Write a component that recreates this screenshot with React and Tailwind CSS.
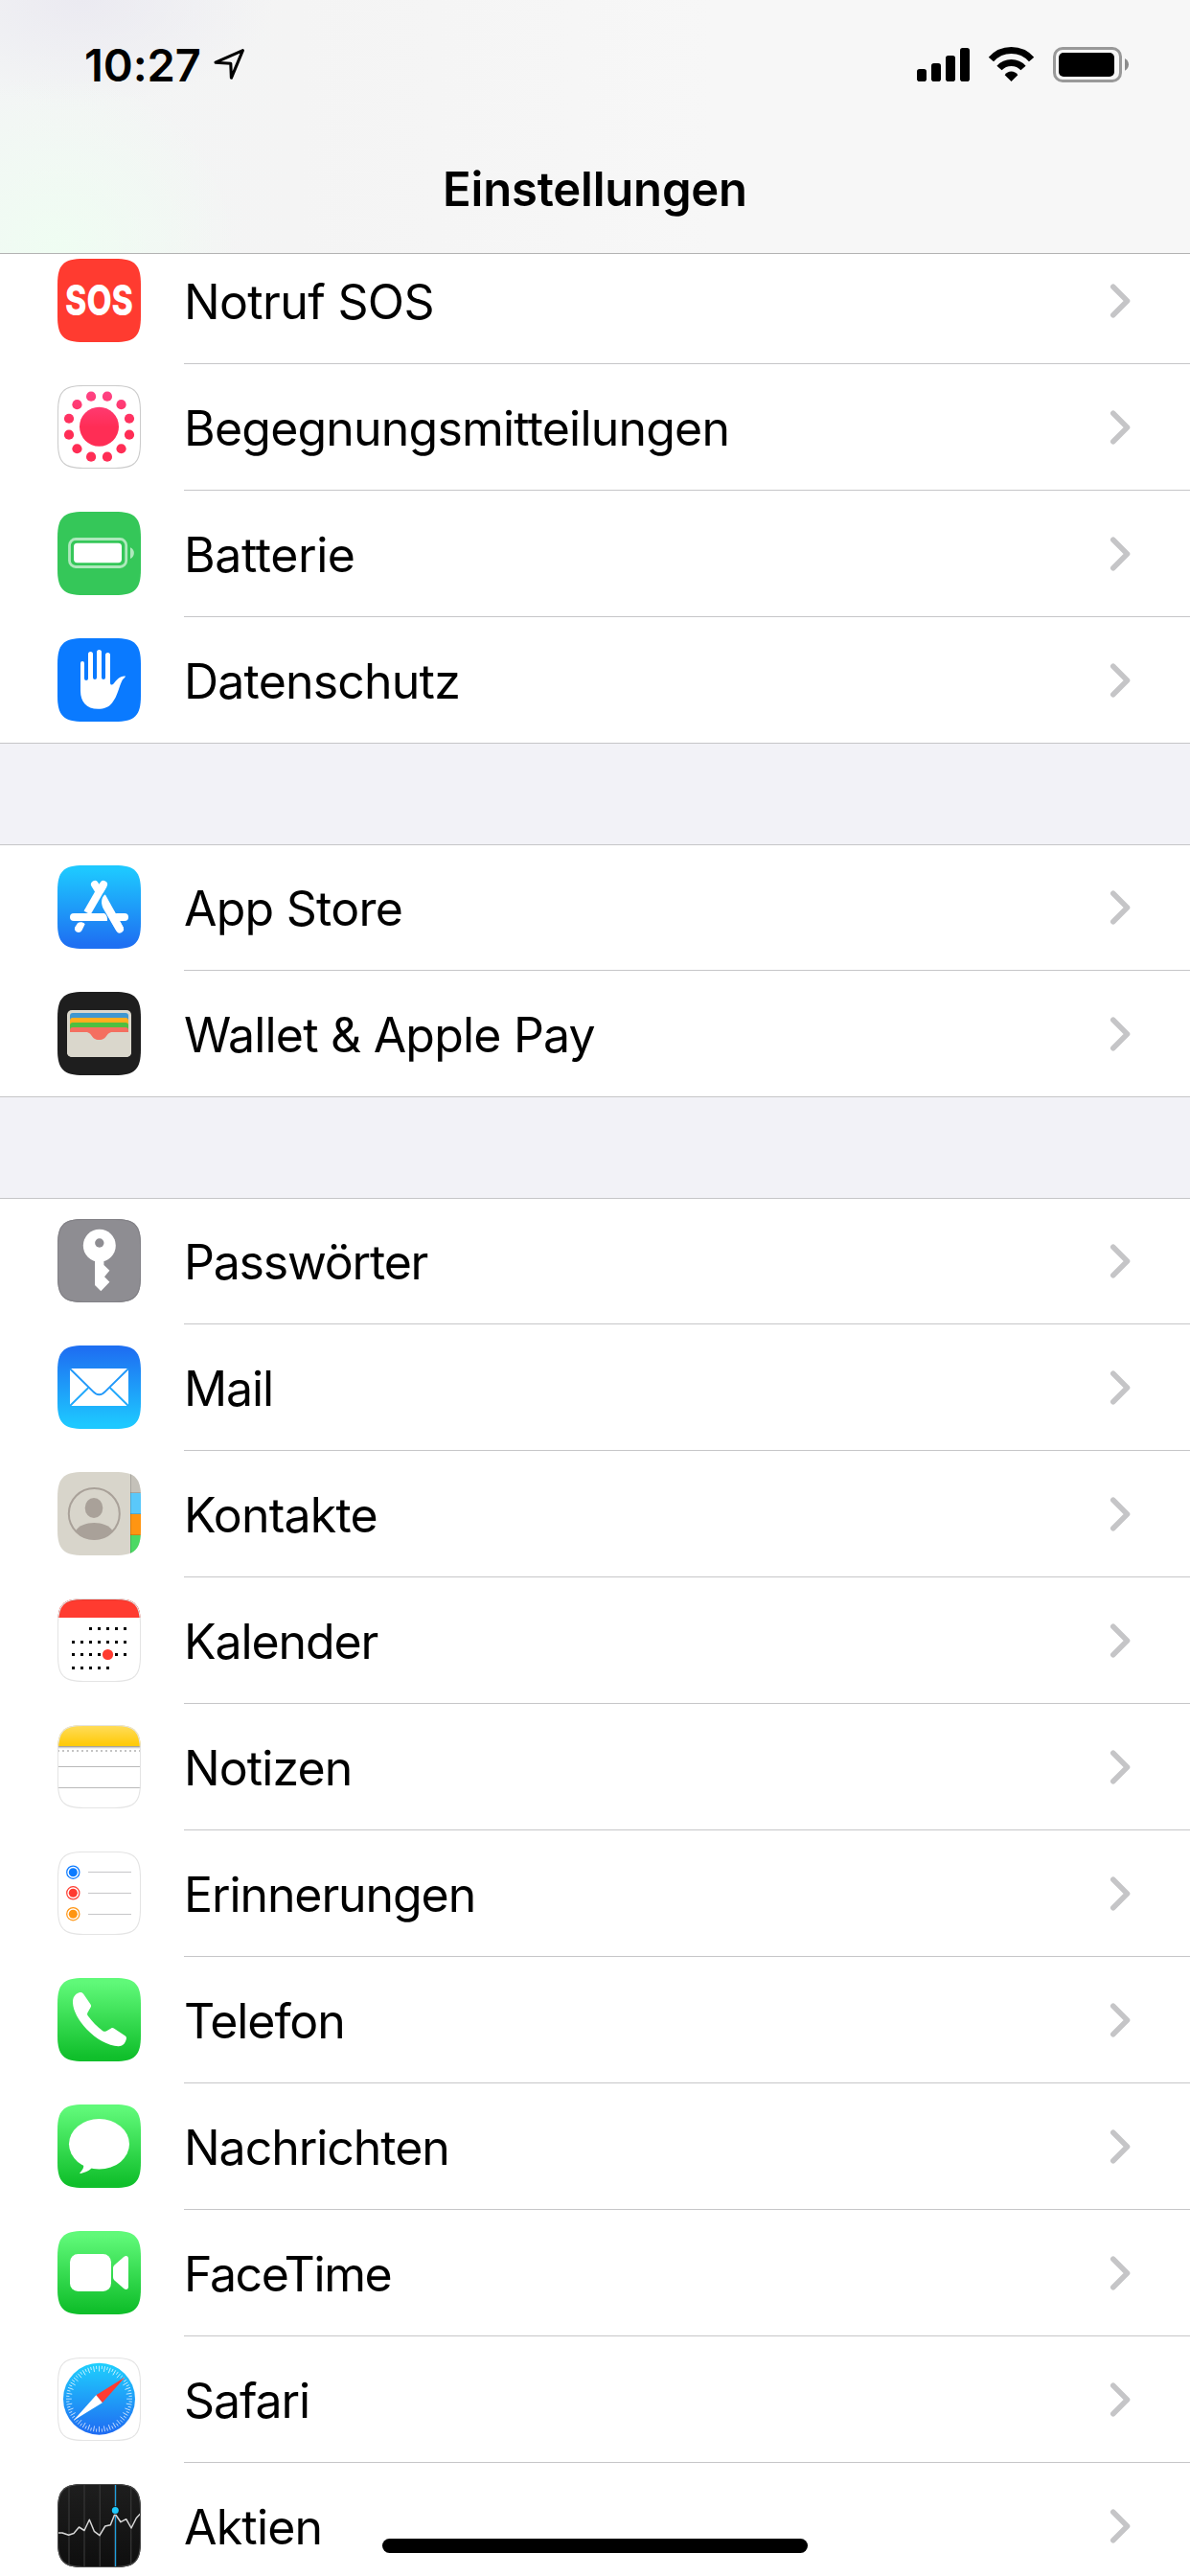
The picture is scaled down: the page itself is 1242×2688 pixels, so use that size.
import { useId } from "react";

const SQUIRCLE =
  "M0 27 C0 6.2 6.2 0 27 0 H60 C80.8 0 87 6.2 87 27 V60 C87 80.8 80.8 87 60 87 H27 C6.2 87 0 80.8 0 60 Z";

// App icon tile: clipped squircle, vertical gradient, optional hairline
const Tile = ({ from, to = from, border, label, children }) => {
  const id = useId();
  return (
    <svg viewBox="0 0 87 87" className="block h-[87px] w-[87px] overflow-visible">
      <defs>
        <clipPath id={`${id}c`}>
          <path d={SQUIRCLE} />
        </clipPath>
        <linearGradient id={`${id}g`} x1="0" y1="0" x2="0" y2="1">
          <stop offset="0.05" stopColor={from} />
          <stop offset="0.95" stopColor={to} />
        </linearGradient>
      </defs>
      <g clipPath={`url(#${id}c)`}>
        <rect width="87" height="87" fill={`url(#${id}g)`} />
        {children}
        {border && <path d={SQUIRCLE} fill="none" stroke={border} strokeWidth="2" />}
      </g>
      {label}
    </svg>
  );
};

const SosIcon = () => (
  <Tile
    from="#ff3b30"
    label={
      <text
        x="8"
        y="59.4"
        textLength="71"
        lengthAdjust="spacingAndGlyphs"
        fill="#fff"
        className="font-['Inter',sans-serif] text-[44px] font-extrabold"
      >
        SOS
      </text>
    }
  />
);

const ExposureIcon = () => (
  <Tile from="#fff" border="#cccccc">
    <defs>
      <linearGradient id="exposure" gradientUnits="userSpaceOnUse" x1="0" y1="8" x2="0" y2="44">
        <stop offset="0" stopColor="#ff4283" />
        <stop offset="1" stopColor="#ff2d55" />
      </linearGradient>
    </defs>
    <g fill="url(#exposure)">
      <circle cx="43.5" cy="43.2" r="20.5" />
      {Array.from({ length: 12 }, (_, i) => {
        const a = ((15 + i * 30) * Math.PI) / 180;
        return <circle key={i} cx={43.5 + 32.6 * Math.cos(a)} cy={43.2 + 32.6 * Math.sin(a)} r="5.1" />;
      })}
    </g>
  </Tile>
);

const BatteryTileIcon = () => (
  <Tile from="#35c759">
    <rect x="12.5" y="28.5" width="59.2" height="29" rx="6.5" fill="none" stroke="#fff" strokeOpacity="0.6" strokeWidth="2.8" />
    <rect x="17" y="32.8" width="50" height="20.4" rx="3.6" fill="#fff" />
    <path d="M76 37.3 C81.2 39.5 81.2 46.8 76 49 Z" fill="#fff" fillOpacity="0.6" />
  </Tile>
);

const PrivacyIcon = () => (
  <Tile from="#0a7aff">
    <path
      fill="#fff"
      d="M24 26 a2 2 0 0 1 4 0 V42 a2 2 0 0 0 4 0 V16.5 a2.5 2.5 0 0 1 5 0 V41 a2 2 0 0 0 4 0 V14.5 a2.5 2.5 0 0 1 5 0 V41 a2 2 0 0 0 4 0 V17.5 a2.5 2.5 0 0 1 5 0 V46 C55 49 57 49.3 58.5 47.5 C62 43 65 39 71 39.5 C70.5 41.5 68.5 42 67.5 44 C64 51 63 60 57 67.5 C53.5 72 48.5 73.8 42.5 73.8 C30 73.8 24 66 24 55 Z"
    />
  </Tile>
);

const AppStoreIcon = () => (
  <Tile from="#1ec8ff" to="#1e70f2">
    <g fill="none" stroke="#fff" strokeWidth="8" strokeLinecap="round">
      <path d="M48 20 L31 49.5" strokeLinecap="butt" />
      <path d="M48 20 L45 25.2" />
      <path d="M39 20 L43 26.5" />
      <path d="M17 54 H45" />
      <path d="M62 54 H70" />
      <path d="M56 50.5 L65 66.5" />
    </g>
    <g fill="#fff">
      <path d="M17 50 H49 C51.5 51.5 52.3 54.5 52 58 H17 Z" />
      <path d="M49.3 30.5 C45.5 34 45 40 48 45.5 L61.5 68.5 L69 65 L50.2 31 Z" />
      <path d="M21 60.3 C23 58.8 26.5 59 28.7 61.3 L25.5 67.7 C23 72.3 16 69 18.4 64.3 Z" />
    </g>
  </Tile>
);

const WalletIcon = () => (
  <Tile from="#1e1e1e">
    <rect x="10" y="19" width="67" height="49" rx="5" fill="#dad7cc" />
    <path d="M13 42 V25 a3 3 0 0 1 3-3 H71 a3 3 0 0 1 3 3 V42 Z" fill="#3f97d0" />
    <path d="M13 42 V30 a3 3 0 0 1 3-3 H71 a3 3 0 0 1 3 3 V42 Z" fill="#ffad1f" />
    <path d="M13 42 V35 a3 3 0 0 1 3-3 H71 a3 3 0 0 1 3 3 V42 Z" fill="#4fbf40" />
    <path d="M13 52 V40 a3 3 0 0 1 3-3 H71 a3 3 0 0 1 3 3 V52 Z" fill="#f46f60" />
    <path
      d="M10 42 H29 C37 42 34.5 50 43.5 50 C52.5 50 50 42 58 42 H77 V63 a5 5 0 0 1 -5 5 H15 a5 5 0 0 1 -5 -5 Z"
      fill="#dad7cc"
    />
  </Tile>
);

const KeyIcon = () => (
  <Tile from="#8e8d92" border="#838287">
    <path fill="#fff" d="M39 43.8 V69 L45.3 75.2 L54.4 65.7 L49 60.3 L54.4 53.7 L48.4 48 V43.8 Z" />
    <circle cx="43.8" cy="27.8" r="17" fill="#fff" />
    <circle cx="43.8" cy="25" r="4.7" fill="#8e8d92" />
  </Tile>
);

const MailIcon = () => (
  <Tile from="#1e70f2" to="#1ec8ff">
    <rect x="13" y="24" width="61" height="39" rx="1.5" fill="#fff" />
    <g fill="none" strokeWidth="1.9">
      <path d="M13 63 L32.3 44 M74 63 L54.7 44" stroke="#22a9fb" />
      <path d="M13 24.3 L37 47.8 C41 52.3 46 52.3 50 47.8 L74 24.3" stroke="#2098f9" />
    </g>
  </Tile>
);

const ContactsIcon = () => (
  <Tile from="#d8d5cb">
    <defs>
      <clipPath id="contact-ring">
        <circle cx="38.3" cy="43.5" r="27" />
      </clipPath>
    </defs>
    <circle cx="38.3" cy="43.5" r="26.5" fill="none" stroke="#a9a199" strokeWidth="2" />
    <g fill="#a9a199">
      <ellipse cx="38" cy="37.5" rx="9.3" ry="10.5" />
      <path clipPath="url(#contact-ring)" d="M19 61.5 C25 50 51.5 50 57.5 61.5 V72 H19 Z" />
    </g>
    <rect x="76" width="11" height="22" fill="#c4c1b9" />
    <rect x="76" y="22" width="11" height="22" fill="#5ac8fa" />
    <rect x="76" y="44" width="11" height="22" fill="#ff9512" />
    <rect x="76" y="66" width="11" height="21" fill="#4cd964" />
    <path d="M76 21.5 H87 M76 43.5 H87 M76 65.5 H87" stroke="#000" strokeOpacity="0.15" />
    <path d="M76.5 0 V87" stroke="#000" strokeOpacity="0.15" />
  </Tile>
);

const calendarDots = [
  { y: 30, cols: [33, 42, 51, 60, 69] },
  { y: 44, cols: [15, 24, 33, 42, 51, 60, 69] },
  { y: 57, cols: [15, 24, 33, 42, 60, 69] },
  { y: 71, cols: [15, 24, 33, 42, 51] },
];

const CalendarIcon = () => (
  <Tile from="#fff" border="#e4e4e4">
    <rect x="1" y="1" width="85" height="19" fill="#ff3b30" />
    {calendarDots.map(({ y, cols }) =>
      cols.map((x) => <rect key={`${x}-${y}`} x={x} y={y} width="3" height="3" fill="#000" />)
    )}
    <circle cx="52.5" cy="58.5" r="5.6" fill="#ff3b30" />
    <path d="M1 20 C1 6 7 1 27 1 H60 C80 1 86 6 86 20" fill="none" stroke="#e9382e" strokeWidth="2" />
  </Tile>
);

const NotesIcon = () => (
  <Tile from="#fff" border="#e4e4e4">
    <defs>
      <linearGradient id="notes" x1="0" y1="0" x2="0" y2="1">
        <stop offset="0" stopColor="#ffdd5e" />
        <stop offset="0.9" stopColor="#ffcb0c" />
      </linearGradient>
    </defs>
    <rect width="87" height="22" fill="url(#notes)" />
    <rect y="22" width="87" height="1" fill="#a8a59c" />
    <rect y="23" width="87" height="1" fill="#d2d2d2" />
    <rect y="24" width="87" height="1" fill="#f0f0f0" />
    <path d="M0 27 H87" stroke="#c4c4c4" strokeWidth="2" strokeDasharray="2 3" />
    <path d="M0 43.5 H87 M0 65.5 H87" stroke="#b9b9b9" />
  </Tile>
);

const RemindersIcon = () => (
  <Tile from="#fff" border="#e4e4e4">
    {[
      { y: 21.7, color: "#0a7aff" },
      { y: 43.3, color: "#ff3b30" },
      { y: 65.2, color: "#ff9512" },
    ].map(({ y, color }) => (
      <g key={color}>
        <circle cx="16.3" cy={y} r="4.5" fill={color} />
        <circle cx="16.3" cy={y} r="6.6" fill="none" stroke={color} strokeWidth="1.2" />
      </g>
    ))}
    <path d="M32 21.5 H77 M32 43.5 H77 M32 65.5 H77" stroke="#c6c6c8" />
  </Tile>
);

const PhoneIcon = () => (
  <Tile from="#60f979" to="#10bf2b">
    <path
      fill="#fff"
      d="M22.5 15.3 C24.5 14.5 25.8 14.8 27 16.5 L34.5 27.5 C35.2 28.7 35.2 29.6 34.5 30.8 L31.5 36 C30.8 37.3 31 38.5 31.8 39.6 C36 45.5 41.5 51 47.3 55.2 C48.5 56 49.5 56.1 50.8 55.4 L56 52.5 C57.2 51.9 58 52 59.2 52.7 L70.5 60.2 C72 61.3 72.3 62.5 71.7 64.3 C70 69.5 67.5 71.3 63.5 71.2 C53 70.8 40 63.5 30.5 53.5 C22 44.5 16.3 34 16 26 C15.8 20.5 18 17 22.5 15.3 Z"
    />
  </Tile>
);

const MessagesIcon = () => (
  <Tile from="#60f979" to="#10bf2b">
    <ellipse cx="43.5" cy="41.3" rx="31.5" ry="26.3" fill="#fff" />
    <path d="M26 62 C28.5 64 27 67.5 23.3 71.3 C23 71.8 23.5 72 24.2 71.9 C29 71 32 69.5 35 67 L38 63 Z" fill="#fff" />
  </Tile>
);

const FaceTimeIcon = () => (
  <Tile from="#60f979" to="#10bf2b">
    <rect x="13" y="24" width="43" height="39" rx="8.5" fill="#fff" />
    <path
      fill="#fff"
      d="M58 39 C58 37.5 58.5 36.5 59.5 35.6 L69.2 27 C71.5 25.2 74 26 74 29 V58 C74 61 71.5 61.8 69.2 60 L59.5 51.4 C58.5 50.5 58 49.5 58 48 Z"
    />
  </Tile>
);

const SafariIcon = () => (
  <Tile from="#fff" border="#e4e4e4">
    <defs>
      <linearGradient id="safari" x1="0" y1="0" x2="0" y2="1">
        <stop offset="0" stopColor="#1fd0fd" />
        <stop offset="1" stopColor="#1f6bf2" />
      </linearGradient>
    </defs>
    <circle cx="43.5" cy="43.2" r="37.5" fill="url(#safari)" />
    {Array.from({ length: 72 }, (_, i) => (
      <path
        key={i}
        d={i % 2 ? "M43.5 8.7 V12" : "M43.5 8.7 V14.5"}
        stroke="#fff"
        strokeWidth="0.75"
        strokeOpacity="0.9"
        transform={`rotate(${i * 5} 43.5 43.2)`}
      />
    ))}
    <path d="M70.5 20.5 L40.3 39.3 L46.8 47.2 Z" fill="#ff3b30" />
    <path d="M16.7 65.8 L40.3 39.3 L46.8 47.2 Z" fill="#fff" />
  </Tile>
);

const StocksIcon = () => (
  <Tile from="#1d1d1d" to="#0f0f0f" border="#4a4a4a">
    <path d="M12 0 V87 M28 0 V87 M44.3 0 V87 M76.7 0 V87" stroke="#333333" strokeWidth="1.4" />
    <path d="M59.3 0 V87" stroke="#3a1d14" />
    <path d="M60.5 0 V87" stroke="#1f9fdc" strokeWidth="1.4" />
    <path
      d="M0 51 H5 L11.7 53.3 L17 51.5 L22.5 45 L28 48.5 L33.3 37.3 L38.3 49.3 L44 53.7 L49.7 44 L55.3 42.7 L60 31 L66 39.7 L71.7 36.7 L77 46 L82.3 35.5 L87 30.5"
      fill="none"
      stroke="#d6d6d6"
      strokeWidth="1.5"
      strokeLinejoin="round"
    />
    <circle cx="60.3" cy="27.5" r="4.3" fill="#141414" />
    <circle cx="60.3" cy="27.5" r="3.5" fill="#1fc8fb" />
  </Tile>
);

const groups = [
  [
    { label: "Notruf SOS", Icon: SosIcon, tracking: "tracking-[-0.65px]" },
    { label: "Begegnungsmitteilungen", Icon: ExposureIcon, tracking: "tracking-[-0.8px]" },
    { label: "Batterie", Icon: BatteryTileIcon, tracking: "tracking-[-0.4px]" },
    { label: "Datenschutz", Icon: PrivacyIcon, tracking: "tracking-[-0.8px]" },
  ],
  [
    { label: "App Store", Icon: AppStoreIcon, tracking: "tracking-[-0.75px]" },
    { label: "Wallet & Apple Pay", Icon: WalletIcon, tracking: "tracking-[-0.8px]" },
  ],
  [
    { label: "Passwörter", Icon: KeyIcon, tracking: "tracking-[-1.2px]" },
    { label: "Mail", Icon: MailIcon, tracking: "tracking-[-1.1px]" },
    { label: "Kontakte", Icon: ContactsIcon, tracking: "tracking-[-0.8px]" },
    { label: "Kalender", Icon: CalendarIcon, tracking: "tracking-[-1.1px]" },
    { label: "Notizen", Icon: NotesIcon, tracking: "tracking-[-0.9px]" },
    { label: "Erinnerungen", Icon: RemindersIcon, tracking: "tracking-[-1.1px]" },
    { label: "Telefon", Icon: PhoneIcon, tracking: "tracking-[-1.1px]" },
    { label: "Nachrichten", Icon: MessagesIcon, tracking: "tracking-[-1.05px]" },
    { label: "FaceTime", Icon: FaceTimeIcon, tracking: "tracking-[-1.4px]" },
    { label: "Safari", Icon: SafariIcon, tracking: "tracking-[-1.1px]" },
    { label: "Aktien", Icon: StocksIcon, tracking: "tracking-[-0.8px]" },
  ],
];

const Row = ({ label, Icon, tracking, last }) => (
  <li className={`flex h-[132px] items-start pl-[60px] first:-mt-px ${last ? "border-b border-[#c6c6c8]" : ""}`}>
    <div className="mt-[22px] shrink-0">
      <Icon />
    </div>
    <div
      className={`ml-[45px] flex flex-1 items-start justify-between pr-[62px] ${last ? "h-[131px]" : "h-[132px] border-b border-[#c6c6c8]"}`}
    >
      <span className={`mt-[37px] text-[50px] leading-[60px] ${tracking}`}>{label}</span>
      <svg viewBox="0 0 22 37" className="mt-[48px] h-[37px] w-[22px]" fill="none">
        <path d="M3.8 3.3 L18.5 18 L3.8 32.7" stroke="#c5c5c7" strokeWidth="5.6" strokeLinecap="round" strokeLinejoin="round" />
      </svg>
    </div>
  </li>
);

const StatusBar = () => (
  <div className="flex h-[132px] items-start justify-between pl-[88px] pr-[63px]">
    <div className="flex">
      <span className="mt-[40px] w-[122px] text-[47px] leading-[56px] font-semibold tracking-[-0.1px]">10:27</span>
      <svg viewBox="0 0 34 34" className="mt-[50px] ml-[12px] h-[34px] w-[34px]" fill="none">
        <path d="M31.4 2.6 L3 15.2 L18.8 16.3 L19.4 31.3 Z" stroke="#000" strokeWidth="3.1" strokeLinejoin="round" />
      </svg>
    </div>
    <div className="mt-[48px] flex">
      <svg viewBox="0 0 56 38" className="h-[38px] w-[56px]">
        <rect x="0" y="24" width="10" height="13" rx="2.8" />
        <rect x="15" y="18" width="10" height="19" rx="2.8" />
        <rect x="30" y="10" width="10" height="27" rx="2.8" />
        <rect x="45" y="2" width="10" height="35" rx="2.8" />
      </svg>
      <svg viewBox="0 0 48 38" className="ml-[19px] h-[38px] w-[48px] overflow-visible">
        <path d="M23.5 37 L16.7 30.2 C20 25.2 27 25.2 30.3 30.2 Z" />
        <g fill="none" stroke="#000" strokeWidth="7">
          <path d="M11 23 A16.9 16.9 0 0 1 36 23" />
          <path d="M2.4 14 A28.1 28.1 0 0 1 44.6 14" />
        </g>
      </svg>
      <svg viewBox="0 0 80 38" className="ml-[19px] h-[38px] w-[80px]">
        <rect x="1.5" y="2.5" width="69" height="34" rx="8.5" fill="none" stroke="#999" strokeWidth="3" />
        <rect x="6" y="7" width="58" height="25" rx="5" />
        <path d="M75 13 C80.3 15.5 80.3 23.2 75 25.7 Z" fill="#8c8c8c" />
      </svg>
    </div>
  </div>
);

export default function App() {
  return (
    <div className="relative h-[2688px] w-[1242px] overflow-hidden bg-[#f2f2f7] font-['Inter',sans-serif] text-black">
      <header className="relative z-10 h-[265px] border-b border-[#b3b3b3] bg-[radial-gradient(ellipse_200px_110px_at_85px_0px,#ebeaf1,transparent),radial-gradient(ellipse_190px_190px_at_60px_264px,#effdf2,transparent),linear-gradient(to_right,#f3f5f5,#f4f4f4_25%,#f7f7f7_60%,#f7f7f7)]">
        <StatusBar />
        <h1 className="mt-[36px] text-center text-[49px] leading-[60px] font-semibold tracking-[-0.2px]">Einstellungen</h1>
      </header>

      {/* The first group is scrolled partly under the header */}
      <main className="-mt-[16px] flex flex-col gap-[105px]">
        {groups.map((rows, i) => (
          <ul key={rows[0].label} className={i === 0 ? "bg-white" : "border-t border-[#c6c6c8] bg-white"}>
            {rows.map((row, j) => (
              <Row key={row.label} {...row} last={j === rows.length - 1} />
            ))}
          </ul>
        ))}
      </main>

      <div className="absolute bottom-[24px] left-[399px] h-[15px] w-[444px] rounded-full bg-black" />
    </div>
  );
}
